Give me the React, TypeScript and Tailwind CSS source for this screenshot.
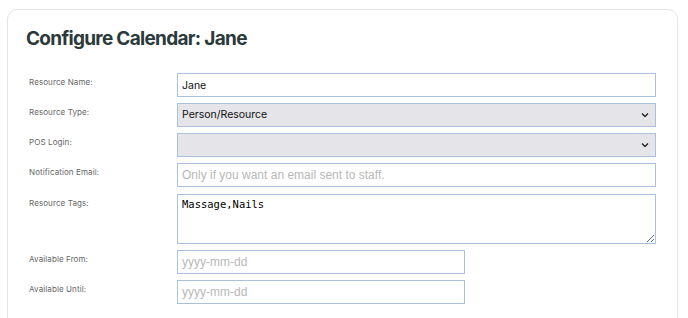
import React from "react";

const labelCls =
  "text-[8px] leading-[12px] pt-[3px] text-[#666] tracking-[0.1px] font-['Inter',sans-serif]";
const boxCls =
  "block h-[24px] border border-[#a9c1dc] outline-none px-[4px] box-border";

function Chevron() {
  return (
    <svg
      className="absolute right-[7px] top-1/2 -translate-y-1/2 pointer-events-none"
      width="8"
      height="5"
      viewBox="0 0 8 5"
      fill="none"
    >
      <path d="M1 1l3 3 3-3" stroke="#222" strokeWidth="1.3" />
    </svg>
  );
}

export default function App() {
  return (
    <div className="w-[688px] h-[318px] bg-white overflow-hidden pt-[9px] pl-[7px]">
      <div className="w-[671px] border border-[#e4e4e4] rounded-[10px] pt-[15px] pb-[40px] pl-[18px] pr-[20px]">
        <h1 className="text-[19px] leading-[28px] font-bold text-[#2b3a39] font-['Inter',sans-serif] tracking-[-0.7px]">
          Configure Calendar: Jane
        </h1>
        <div className="mt-[20px] pl-[3px] grid grid-cols-[148px_479px] gap-y-[6px]">
          <label className={labelCls}>Resource Name:</label>
          <input
            className={`${boxCls} w-full bg-white text-[10.5px] text-[#111] font-['Inter',sans-serif]`}
            defaultValue="Jane"
          />

          <label className={labelCls}>Resource Type:</label>
          <div className="relative h-[24px]">
            <select
              className={`${boxCls} w-full appearance-none bg-[#e4e4e9] text-[10.5px] text-[#111] font-['Inter',sans-serif]`}
              defaultValue="p"
            >
              <option value="p">Person/Resource</option>
            </select>
            <Chevron />
          </div>

          <label className={labelCls}>POS Login:</label>
          <div className="relative h-[24px]">
            <select
              className={`${boxCls} w-full appearance-none bg-[#e4e4e9] text-[10.5px] text-[#111] font-['Inter',sans-serif]`}
              defaultValue=""
            >
              <option value=""></option>
            </select>
            <Chevron />
          </div>

          <label className={labelCls}>Notification Email:</label>
          <input
            className={`${boxCls} w-full bg-white text-[12px] font-['Liberation_Sans',sans-serif] placeholder:text-[#b8b8b8]`}
            placeholder="Only if you want an email sent to staff."
          />

          <label className={`${labelCls} mt-[1px]`}>Resource Tags:</label>
          <textarea
            className="block mt-[1px] h-[50px] w-full border border-[#a9c1dc] outline-none px-[4px] pt-[3px] text-[10.5px] leading-[13px] font-['DejaVu_Sans_Mono',monospace] text-black box-border"
            defaultValue="Massage,Nails"
          />

          <label className={labelCls}>Available From:</label>
          <input
            className={`${boxCls} w-[288px] bg-white text-[12px] font-['Liberation_Sans',sans-serif] placeholder:text-[#b8b8b8]`}
            placeholder="yyyy-mm-dd"
          />

          <label className={labelCls}>Available Until:</label>
          <input
            className={`${boxCls} w-[288px] bg-white text-[12px] font-['Liberation_Sans',sans-serif] placeholder:text-[#b8b8b8]`}
            placeholder="yyyy-mm-dd"
          />
        </div>
      </div>
    </div>
  );
}
